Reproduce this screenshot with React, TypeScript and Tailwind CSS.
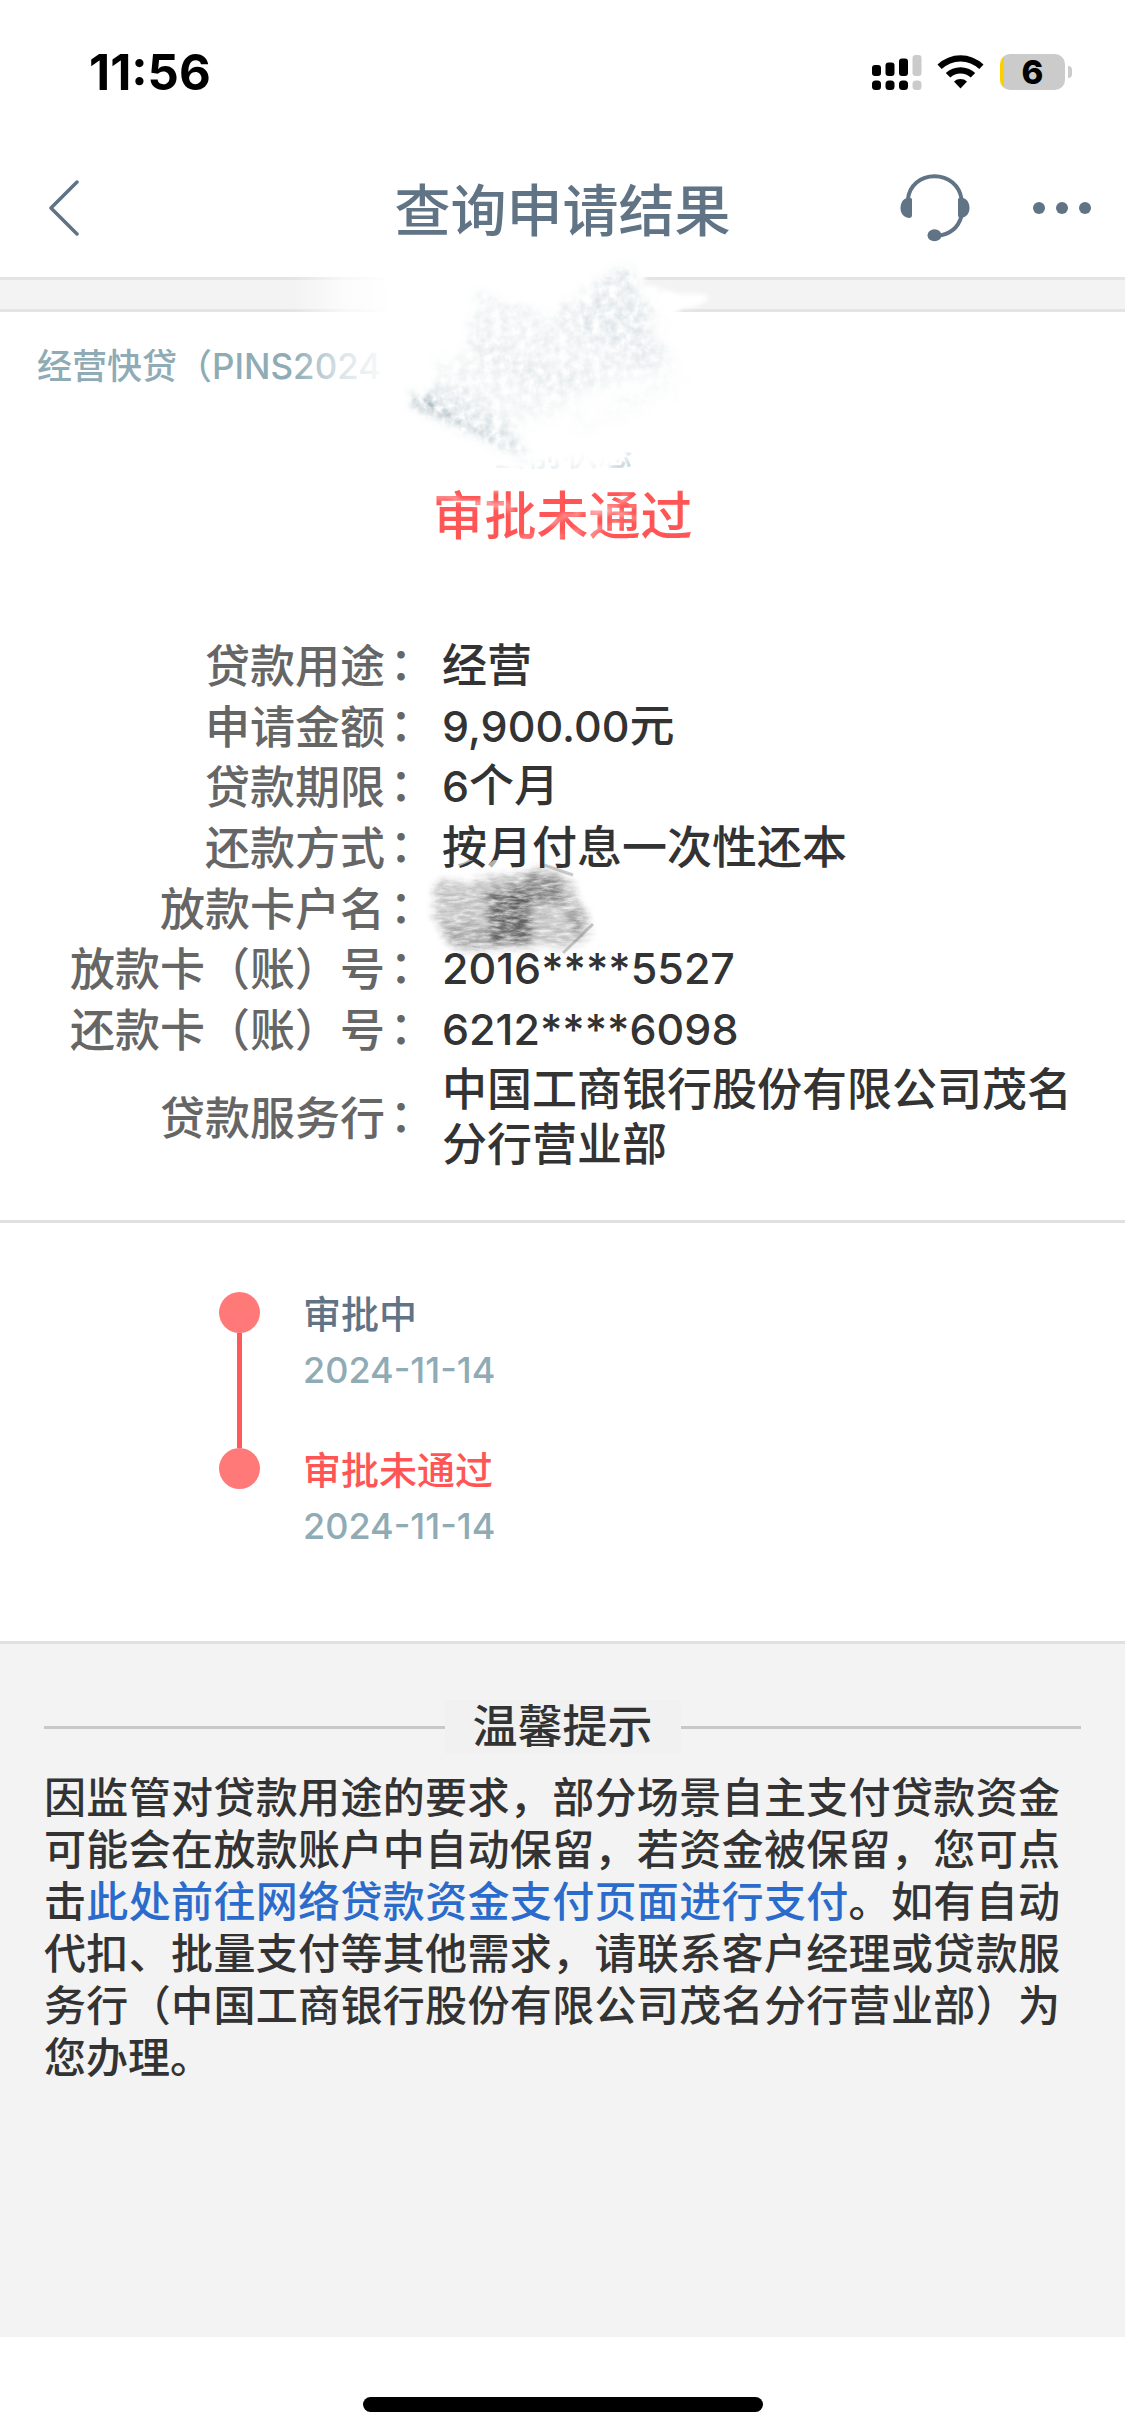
interface Detail {
  label: string
  number?: string
  value?: string
}

const details: Detail[] = [
  { label: '贷款用途', value: '经营' },
  { label: '申请金额', number: '9,900.00', value: '元' },
  { label: '贷款期限', number: '6', value: '个月' },
  { label: '还款方式', value: '按月付息一次性还本' },
  { label: '放款卡户名' },
  { label: '放款卡（账）号', number: '2016****5527' },
  { label: '还款卡（账）号', number: '6212****6098' },
  { label: '贷款服务行', value: '中国工商银行股份有限公司茂名分行营业部' },
]

const steps = [
  { title: '审批中', date: '2024-11-14', failed: false },
  { title: '审批未通过', date: '2024-11-14', failed: true },
]

function StatusBar() {
  return (
    <div className="h-36 pl-[89px] pr-[53px] flex items-center justify-between text-black font-bold">
      <span className="text-[49px] leading-none">11:56</span>
      <div className="flex items-center">
        <svg width="50" height="36" viewBox="0 0 50 36" aria-hidden="true">
          <rect x="0" y="11" width="9" height="11" rx="3" />
          <rect x="13.5" y="8.5" width="9" height="13.5" rx="3" />
          <rect x="27" y="4.5" width="9" height="17.5" rx="3" />
          <rect x="40.5" y="1" width="9" height="21" rx="3" fill="#cbcbcb" />
          <rect x="0" y="26.5" width="9" height="9.5" rx="3.5" />
          <rect x="13.5" y="26.5" width="9" height="9.5" rx="3.5" />
          <rect x="27" y="26.5" width="9" height="9.5" rx="3.5" />
          <rect x="40.5" y="26.5" width="9" height="9.5" rx="3.5" fill="#cbcbcb" />
        </svg>
        <svg className="ml-[15px]" width="48" height="36" viewBox="0 0 48 36" aria-hidden="true">
          <path d="M0.5 10.5 A33.5 33.5 0 0 1 46.5 10.5 L42.3 15 A27.2 27.2 0 0 0 4.7 15 Z" />
          <path d="M8.8 19 A21.5 21.5 0 0 1 38.2 19 L33.7 23.5 A15 15 0 0 0 13.3 23.5 Z" />
          <path d="M17 27.5 A9.8 9.8 0 0 1 30 27.5 L23.5 34.5 Z" />
        </svg>
        <div className="ml-[15px] w-[65px] h-9 rounded-[10px] bg-[linear-gradient(90deg,#fccf00_4px,#cbcbcb_4px)] text-center text-[33px] leading-9 font-extrabold">
          6
        </div>
        <span className="ml-[3px] w-1 h-3 rounded-r-full bg-[#cbcbcb]" />
      </div>
    </div>
  )
}

function NavBar() {
  return (
    <header className="h-[133px] pl-9 pr-[34px] pb-1.5 flex items-center justify-between relative text-[#607486]">
      <button type="button" aria-label="返回" className="w-14 h-20 flex items-center justify-center">
        <svg width="32" height="56" viewBox="0 0 32 56" fill="none" stroke="currentColor" strokeWidth="3.5" strokeLinecap="round">
          <path d="M29 2 L3 28 L29 54" strokeLinejoin="round" />
        </svg>
      </button>
      <h1 className="absolute inset-0 m-auto w-fit h-fit text-[56px] leading-none font-medium">查询申请结果</h1>
      <div className="flex items-center gap-[63px]">
        <button type="button" aria-label="客服">
          <svg width="70" height="68" viewBox="0 0 70 68" fill="none" stroke="currentColor" strokeWidth="4">
            <path d="M8 25 C9.5 11.5 20.5 2.3 34.5 2.3 C48.5 2.3 59.5 11.5 61.5 25" />
            <path d="M61.5 42 C58.5 53 50.5 60.5 37 61.8" />
            <path d="M12 25 L12 41 Q12 44 9 44 C3 43 0.5 39 0.5 34 C0.5 29 3 25 7 24 L9 24 Q12 24 12 25 Z" fill="currentColor" stroke="none" />
            <path d="M58 25 L58 41 Q58 44 61 44 C67 43 69.5 39 69.5 34 C69.5 29 67 25 63 24 L61 24 Q58 24 58 25 Z" fill="currentColor" stroke="none" />
            <ellipse cx="34.5" cy="61.3" rx="7" ry="6" fill="currentColor" stroke="none" />
          </svg>
        </button>
        <button type="button" aria-label="更多" className="h-20 flex items-center gap-[11px]">
          <span className="size-3 rounded-full bg-current" />
          <span className="size-3 rounded-full bg-current" />
          <span className="size-3 rounded-full bg-current" />
        </button>
      </div>
    </header>
  )
}

// Eraser smear that hides the application number.
function NumberSmear() {
  return (
    <svg
      className="absolute -top-7 left-1/2 -translate-x-1/2 pointer-events-none"
      width="540"
      height="310"
      viewBox="292 249 540 310"
      aria-hidden="true"
    >
      <defs>
        <linearGradient id="fadeIn" gradientUnits="userSpaceOnUse" x1="292" y1="0" x2="392" y2="0">
          <stop offset="0" stopColor="#fff" stopOpacity="0" />
          <stop offset="0.5" stopColor="#fff" stopOpacity="0.7" />
          <stop offset="1" stopColor="#fff" />
        </linearGradient>
        <filter id="rough" x="-10%" y="-10%" width="120%" height="120%">
          <feTurbulence type="fractalNoise" baseFrequency="0.05 0.12" numOctaves="3" seed="4" result="n" />
          <feDisplacementMap in="SourceGraphic" in2="n" scale="26" />
          <feGaussianBlur stdDeviation="2" />
        </filter>
        <filter id="grain" x="-10%" y="-10%" width="120%" height="120%">
          <feTurbulence type="fractalNoise" baseFrequency="0.12" numOctaves="4" seed="9" result="n" />
          <feColorMatrix in="n" type="matrix" values="0 0 0 0 0  0 0 0 0 0  0 0 0 0 0  0 0 0 1.8 -0.4" result="a" />
          <feDisplacementMap in="SourceGraphic" in2="n" scale="34" result="d" />
          <feGaussianBlur in="d" stdDeviation="4" result="b" />
          <feComposite in="b" in2="a" operator="in" />
        </filter>
      </defs>
      <path d="M292 272 H600 L640 300 L640 400 H292 Z" fill="url(#fadeIn)" />
      <g filter="url(#rough)">
        <path d="M385 268 L650 268 L640 286 L706 292 L700 302 L640 318 L660 400 L632 456 L480 462 L385 400 Z" fill="#fff" />
        <path d="M480 436 H606 V482 H480 Z" fill="#fff" opacity="0.85" />
        <path d="M596 430 H646 V470 H596 Z" fill="#fff" opacity="0.6" />
      </g>
      <g filter="url(#grain)" fill="#7f98a3">
        <path d="M478 290 L500 296 L552 314 L622 260 L634 264 L636 290 L656 304 L650 335 L672 350 L660 372 L600 385 L540 380 L480 352 L466 340 Z" opacity="0.15" />
        <path d="M562 310 L628 262 L640 300 L660 345 L650 365 L620 345 L580 330 Z" opacity="0.12" />
        <path d="M440 366 L480 340 L540 370 L600 380 L560 410 L515 420 L528 458 L500 442 L417 408 L420 396 L438 388 Z" opacity="0.13" />
        <path d="M440 380 L470 388 L512 430 L528 456 L480 432 L420 406 Z" opacity="0.14" />
        <path d="M418 394 L440 400 L480 425 L520 450 L500 445 L460 425 L417 408 Z" opacity="0.4" />
        <path d="M414 394 L432 396 L436 408 L416 408 Z" opacity="0.6" />
        <path d="M690 372 L650 392 L600 420 L560 432 L620 402 L660 380 Z" opacity="0.16" />
      </g>
      <g stroke="#fff" strokeWidth="5" opacity="0.5" filter="url(#rough)">
        <path d="M436 494 L510 504" />
        <path d="M540 520 L630 496" />
        <path d="M590 506 L636 514" />
        <path d="M520 540 L620 520" strokeWidth="3" />
      </g>
    </svg>
  )
}

// Pencil-like smudge over the account holder's name.
function NameSmudge() {
  return (
    <svg
      className="absolute -top-5 -left-4 pointer-events-none"
      width="180"
      height="104"
      viewBox="0 0 180 104"
      role="img"
      aria-label="已遮挡"
    >
      <defs>
        <filter id="pencil" x="-10%" y="-10%" width="120%" height="120%">
          <feTurbulence type="fractalNoise" baseFrequency="0.08 0.3" numOctaves="5" seed="3" result="n" />
          <feColorMatrix in="n" type="matrix" values="0 0 0 0 0  0 0 0 0 0  0 0 0 0 0  0 0 0 1.4 0.05" result="a" />
          <feDisplacementMap in="SourceGraphic" in2="n" scale="20" result="d" />
          <feGaussianBlur in="d" stdDeviation="3" result="b" />
          <feComposite in="b" in2="a" operator="in" />
        </filter>
      </defs>
      <path d="M28 6 L50 -4 M62 8 L74 -2" stroke="#fff" strokeWidth="5" opacity="0.6" />
      <g filter="url(#pencil)" fill="#2b2b2b">
        <path d="M8 24 L60 18 L118 8 L146 20 L152 40 L164 56 L160 74 L140 90 L120 84 L60 90 L36 92 L20 82 L10 60 Z" opacity="0.3" />
        <path d="M62 32 H104 L106 84 L64 86 Z" opacity="0.6" />
        <path d="M80 24 L118 12 L136 22 V40 H80 Z" opacity="0.35" />
        <path d="M62 36 H140 V42 H62 Z" opacity="0.3" />
        <path d="M148 46 L158 56 L154 78 L148 76 Z" opacity="0.35" />
        <path d="M12 66 H60 V88 L24 84 Z" opacity="0.2" />
      </g>
      <path d="M137 93 L167 64" stroke="#555" strokeWidth="3" opacity="0.3" />
      <path d="M118 5 L147 15" stroke="#555" strokeWidth="3" opacity="0.3" />
    </svg>
  )
}

function Summary() {
  return (
    <section className="relative border-t-[3px] border-[#e4e4e4]">
      <div className="h-8 bg-[#f3f3f3] border-b-[3px] border-[#e4e4e4]" />
      <p className="pt-[31px] pl-[37px] text-[#8fabb5] text-[35px] leading-[46px] font-medium">经营快贷（PINS2024</p>
      <p className="pt-[41px] text-center text-[#8fabb5] text-[35px] leading-[46px] font-medium">当前状态</p>
      <p className="pt-2 text-center text-[#ff5555] text-[52px] leading-[66px] font-medium">审批未通过</p>
      <NumberSmear />
    </section>
  )
}

function DetailTable() {
  return (
    <section className="pt-[85px] pb-[46px] pr-[50px] border-b-[3px] border-[#e0e0e0]">
      <table className="w-full h-[539px] text-[45px] leading-[55px] font-medium">
        <tbody>
          {details.map(({ label, number, value }) => (
            <tr key={label}>
              <th scope="row" className="w-[442px] p-0 pr-[25px] text-right font-medium whitespace-nowrap text-[#666]">
                {label}
                <span className="inline-flex w-8 justify-center font-['Noto_Sans_CJK_TC',sans-serif]">：</span>
              </th>
              <td className="p-0 text-[#333]">
                {number && <span className="text-[43px]">{number}</span>}
                {value}
                {!number && !value && (
                  <div className="relative h-[55px]">
                    <NameSmudge />
                  </div>
                )}
              </td>
            </tr>
          ))}
        </tbody>
      </table>
    </section>
  )
}

function Timeline() {
  return (
    <section className="pt-[66px] pb-10 pl-[219px] border-b-[3px] border-[#e0e0e0]">
      <ol>
        {steps.map(({ title, date, failed }, i) => (
          <li key={title} className="h-[156px] flex gap-[43px]">
            <div className="w-[41px] pt-[3px] flex flex-col items-center">
              <span className="size-[41px] shrink-0 rounded-full bg-[#ff7979]" />
              {i < steps.length - 1 && <span className="w-[5px] h-[115px] shrink-0 bg-[#ff5a5a]" />}
            </div>
            <div className="font-medium">
              <p className={failed ? 'text-[38px] leading-[50px] text-[#ff5555]' : 'text-[38px] leading-[50px] text-[#607486]'}>
                {title}
              </p>
              <p className="mt-2 text-[36px] leading-[46px] text-[#8fabb5]">{date}</p>
            </div>
          </li>
        ))}
      </ol>
    </section>
  )
}

function Tips() {
  return (
    <section className="flex-1 pt-14 px-11 bg-[#f3f3f3] text-[#333] font-medium">
      <div className="flex items-center">
        <span className="flex-1 h-[3px] bg-[#c8c8c8]" />
        <h2 className="px-7 text-[45px] leading-[54px] bg-[#f1f1f1]">温馨提示</h2>
        <span className="flex-1 h-[3px] bg-[#c8c8c8]" />
      </div>
      <p className="mt-[18px] pr-[21px] text-[42px] leading-[52px] text-justify">
        因监管对贷款用途的要求，部分场景自主支付贷款资金可能会在放款账户中自动保留，若资金被保留，您可点击
        <a href="#pay" className="text-[#2a6bcb]">此处前往网络贷款资金支付页面进行支付</a>
        。如有自动代扣、批量支付等其他需求，请联系客户经理或贷款服务行（中国工商银行股份有限公司茂名分行营业部）为您办理。
      </p>
    </section>
  )
}

export default function App() {
  return (
    <div lang="zh-CN" className="min-h-screen flex flex-col bg-white font-[Inter,'Noto_Sans_CJK_SC',sans-serif]">
      <StatusBar />
      <NavBar />
      <main className="flex-1 flex flex-col">
        <Summary />
        <DetailTable />
        <Timeline />
        <Tips />
      </main>
      <footer className="h-[98px] pb-[23px] flex items-end justify-center">
        <span className="w-[400px] h-[15px] rounded-full bg-black" />
      </footer>
    </div>
  )
}
